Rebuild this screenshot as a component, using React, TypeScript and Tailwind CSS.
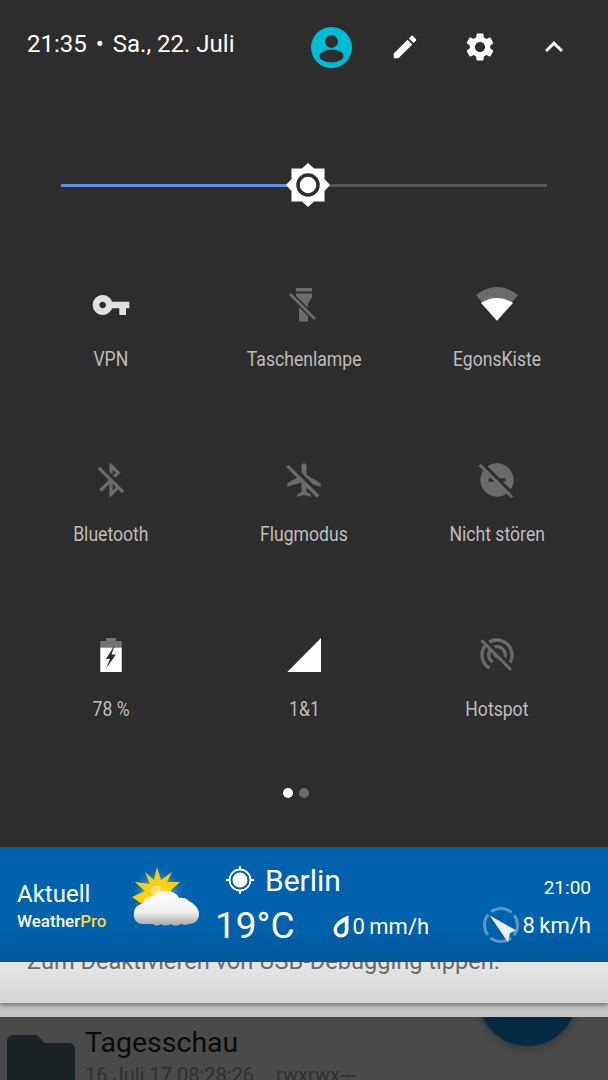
const OFF = "#6b6b6b";

const paths = {
  edit: "M3 17.25V21h3.75L17.81 9.94l-3.75-3.75L3 17.25zM20.71 7.04c.39-.39.39-1.02 0-1.41l-2.34-2.34c-.39-.39-1.02-.39-1.41 0l-1.83 1.83 3.75 3.75 1.83-1.83z",
  gear: "M19.14 12.94c.04-.3.06-.61.06-.94 0-.32-.02-.64-.07-.94l2.03-1.58c.18-.14.23-.41.12-.61l-1.92-3.32c-.12-.22-.37-.29-.59-.22l-2.39.96c-.5-.38-1.03-.7-1.62-.94l-.36-2.54c-.04-.24-.24-.41-.48-.41h-3.84c-.24 0-.43.17-.47.41l-.36 2.54c-.59.24-1.13.57-1.62.94l-2.39-.96c-.22-.08-.47 0-.59.22L2.74 8.87c-.12.21-.08.47.12.61l2.03 1.58c-.05.3-.09.63-.09.94s.02.64.07.94l-2.03 1.58c-.18.14-.23.41-.12.61l1.92 3.32c.12.22.37.29.59.22l2.39-.96c.5.38 1.03.7 1.62.94l.36 2.54c.05.24.24.41.48.41h3.84c.24 0 .44-.17.47-.41l.36-2.54c.59-.24 1.13-.56 1.62-.94l2.39.96c.22.08.47 0 .59-.22l1.92-3.32c.12-.22.07-.47-.12-.61l-2.01-1.58zM12 15.6c-1.98 0-3.6-1.62-3.6-3.6s1.62-3.6 3.6-3.6 3.6 1.62 3.6 3.6-1.62 3.6-3.6 3.6z",
  chevron: "M12 8l-6 6 1.41 1.41L12 10.83l4.59 4.58L18 14z",
  key: "M12.65 10C11.83 7.67 9.61 6 7 6c-3.31 0-6 2.69-6 6s2.69 6 6 6c2.61 0 4.83-1.67 5.65-4H17v4h4v-4h2v-4H12.65zM7 14c-1.1 0-2-.9-2-2s.9-2 2-2 2 .9 2 2-.9 2-2 2z",
  bluetooth: "M13 5.83l1.88 1.88-1.6 1.6 1.41 1.41 3.02-3.02L12 2h-1v5.03l2 2v-3.2zM5.41 4L4 5.41 10.59 12 5 17.59 6.41 19 11 14.41V22h1l4.29-4.29 2.3 2.29L20 18.59 5.41 4zM13 18.17v-3.76l1.88 1.88L13 18.17z",
  plane: "M10.5 7.67V3.5c0-.83.67-1.5 1.5-1.5s1.5.67 1.5 1.5V9l8.5 5v2l-4.49-1.32-7.01-7.01zm9.28 14.94l1.41-1.41-7.69-7.7-3.94-3.94-6.75-6.75-1.42 1.41 6.38 6.38L2 14v2l8.5-2.5V19L8 20.5V22l4-1 4 1v-1.5L13.5 19v-2.67l6.28 6.28z",
  dnd: "M17 11v2h-1.46l4.68 4.68C21.34 16.07 22 14.11 22 12c0-5.52-4.48-10-10-10-2.11 0-4.07.66-5.68 1.78L13.54 11H17zM2.27 2.27L1 3.54l2.78 2.78C2.66 7.93 2 9.89 2 12c0 5.52 4.48 10 10 10 2.11 0 4.07-.66 5.68-1.78L20.46 23l1.27-1.27L11 11 2.27 2.27zM7 13v-2h1.46l2 2H7z",
  hotspot: "M17.56 14.24c.28-.69.44-1.45.44-2.24 0-3.31-2.69-6-6-6-.79 0-1.55.16-2.24.44l1.62 1.62c.2-.03.41-.06.62-.06 2.21 0 4 1.79 4 4 0 .21-.02.42-.05.63l1.61 1.61zM12 4c4.42 0 8 3.58 8 8 0 1.35-.35 2.62-.95 3.74l1.47 1.47C21.46 15.69 22 13.91 22 12c0-5.52-4.48-10-10-10-1.91 0-3.69.55-5.21 1.47l1.46 1.46C9.37 4.34 10.65 4 12 4zM3.27 2.5L2 3.77l2.1 2.1C2.79 7.57 2 9.69 2 12c0 3.7 2.01 6.92 4.99 8.65l1-1.73C5.61 17.53 4 14.96 4 12c0-1.76.57-3.38 1.53-4.69l1.43 1.44C6.36 9.68 6 10.8 6 12c0 2.22 1.21 4.15 3 5.19l1-1.74c-1.19-.7-2-1.97-2-3.45 0-.65.17-1.25.44-1.79l1.58 1.58L10 12c0 1.1.9 2 2 2l.21-.02.01.01 7.51 7.51L21 20.23 4.27 3.5l-1-1z",
};

function Mat({ d, size = 40, color = "#fff" }: { d: string; size?: number; color?: string }) {
  return (
    <svg width={size} height={size} viewBox="0 0 24 24" fill={color}>
      <path d={d} />
    </svg>
  );
}

function Flashlight() {
  return (
    <svg width="40" height="40" viewBox="0 0 40 40">
      <rect x="12" y="3" width="16" height="3.5" fill={OFF} />
      <path d="M12 8.5h16v4l-4 6v18h-9v-18l-3-6z" fill={OFF} />
      <path d="M6 9 L31 34" stroke="#2d2d2d" strokeWidth="6" />
      <path d="M6 9 L31 34" stroke={OFF} strokeWidth="2.8" />
    </svg>
  );
}

function Wifi() {
  return (
    <svg width="44" height="40" viewBox="0 0 44 40">
      <path d="M1 10 Q22 -6 43 10 L22 35.7z" fill={OFF} />
      <path d="M6 18 Q22 8 38 18 L22 35.7z" fill="#fff" />
    </svg>
  );
}

function Battery() {
  return (
    <svg width="40" height="40" viewBox="0 0 40 40">
      <path d="M15 3h10v3h5.7v7H9.3V6H15z" fill="#757575" />
      <path d="M9.3 12.7h21.4V37H9.3z" fill="#fff" />
      <path d="M23 11 15 24h4l-4 9.500 10-14h-4.500l3-8.500z" fill="#2d2d2d" />
    </svg>
  );
}

function Signal() {
  return (
    <svg width="40" height="40" viewBox="0 0 40 40">
      <path d="M3.300 37 37 3v34z" fill="#fff" />
    </svg>
  );
}

const tiles = [
  { label: "VPN", icon: <Mat d={paths.key} color="#e0e0e0" /> },
  { label: "Taschenlampe", icon: <Flashlight /> },
  { label: "EgonsKiste", icon: <Wifi /> },
  { label: "Bluetooth", icon: <Mat d={paths.bluetooth} color={OFF} /> },
  { label: "Flugmodus", icon: <Mat d={paths.plane} color={OFF} /> },
  { label: "Nicht stören", icon: <Mat d={paths.dnd} color={OFF} /> },
  { label: "78 %", icon: <Battery /> },
  { label: "1&1", icon: <Signal /> },
  { label: "Hotspot", icon: <Mat d={paths.hotspot} color={OFF} /> },
];

function Avatar() {
  return (
    <svg width="41" height="41" viewBox="0 0 41 41">
      <circle cx="20.500" cy="20.500" r="20.500" fill="#00bcd4" />
      <circle cx="20.500" cy="14.500" r="6.500" fill="#2d2d2d" />
      <ellipse cx="20.500" cy="29" rx="12" ry="6.500" fill="#2d2d2d" />
    </svg>
  );
}

function Thumb() {
  return (
    <svg width="44" height="44" viewBox="0 0 44 44">
      <path d="M22 0l6 5.500h10.500V16L44 22l-5.500 6v10.500H28L22 44l-6-5.500H5.500V28L0 22l5.500-6V5.500H16z" fill="#fff" />
      <circle cx="22" cy="22" r="10" fill="#fff" stroke="#2d2d2d" strokeWidth="3.500" />
    </svg>
  );
}

function WeatherIcon() {
  return (
    <svg width="72" height="65" viewBox="0 0 72 65">
      <defs>
        <radialGradient id="glow">
          <stop offset="0.5" stopColor="#7fb0d8" stopOpacity="0.6" />
          <stop offset="1" stopColor="#0060ab" stopOpacity="0" />
        </radialGradient>
        <linearGradient id="cloud" x1="0" y1="0" x2="0" y2="1">
          <stop offset="0" stopColor="#ffffff" />
          <stop offset="0.6" stopColor="#f0f0f0" />
          <stop offset="1" stopColor="#a9a9a9" />
        </linearGradient>
      </defs>
      <circle cx="28" cy="30" r="28" fill="url(#glow)" />
      <path d="M2 33 15 27 5 18 20 20 15 8 24 16 27 3 31 16 42 8 37 18 50 18 41 26 40 40 12 40z" fill="#fbd010" />
      <circle cx="27" cy="27" r="6" fill="#fde36a" />
      <path
        d="M13 60c-8 0-10-7-9-12 1-6 5-8 9-8 1-5 5-8 11-8 2-4 6-5 12-5 7 0 11 3 13 7 3-1 8 0 10 3 4 2 10 7 10 13 0 6-4 10-10 10-2 1-6 1-8 0-3 2-8 2-10 0-3 2-8 2-10 0-3 2-6 2-8 0z"
        fill="url(#cloud)"
      />
    </svg>
  );
}

function Target() {
  return (
    <svg width="30" height="30" viewBox="0 0 30 30" fill="#fff">
      <circle cx="15" cy="15" r="7.500" />
      <circle cx="15" cy="15" r="10.500" fill="none" stroke="#fff" strokeWidth="1.800" />
      <path d="M15 1v4M15 25v4M1 15h4M25 15h4" stroke="#fff" strokeWidth="1.800" />
    </svg>
  );
}

function Drop() {
  return (
    <svg width="16" height="23" viewBox="0 0 16 23">
      <path
        fillRule="evenodd"
        d="M15.500.5V15a7.500 7.500 0 0 1-15 0C.5 8 9 3 15.500.5zM11.800 7C7.500 9 4 11.500 4 15a3.900 3.900 0 0 0 7.800 0z"
        fill="#fff"
      />
    </svg>
  );
}

function Compass() {
  return (
    <svg width="38" height="38" viewBox="0 0 38 38">
      <circle cx="19" cy="19" r="16.500" fill="none" stroke="#5d97c9" strokeWidth="3" strokeDasharray="22 3.900" strokeDashoffset="11" />
      <path d="M7.700 9.500 34.300 24.500 28 27 26 36.200z" fill="#e9eef2" />
    </svg>
  );
}

export default function App() {
  return (
    <div className="w-[608px] h-[1080px] overflow-hidden bg-[#4a4a4a] [font-family:Roboto,sans-serif]">
      <div className="h-[847px] bg-[#2d2d2d]">
        {/* header */}
        <div className="h-[94px] flex items-center pl-[27px] pr-[17px]">
          <div className="text-[24px] text-white -mt-[6px] flex items-center whitespace-pre">
            <span>21:35</span>
            <span className="w-[26px] text-center">•</span>
            <span>Sa., 22. Juli</span>
          </div>
          <div className="ml-auto flex items-center">
            <div className="w-[74px] flex justify-center"><Avatar /></div>
            <div className="w-[74px] flex justify-center"><Mat d={paths.edit} size={30} /></div>
            <div className="w-[75px] flex justify-center"><Mat d={paths.gear} size={34} /></div>
            <div className="w-[74px] flex justify-center"><Mat d={paths.chevron} size={36} /></div>
          </div>
        </div>

        {/* brightness */}
        <div className="relative h-[44px] mt-[69px] mx-[61px] flex items-center">
          <div className="h-[3px] w-[230px] bg-[#5b8fe8]" />
          <div className="h-[3px] flex-1 bg-[#555555]" />
          <div className="absolute left-[225px] top-0"><Thumb /></div>
        </div>

        {/* tiles */}
        <div className="mt-[78px] px-[14px] grid grid-cols-3 gap-y-[89px]">
          {tiles.map((t) => (
            <div key={t.label} className="flex flex-col items-center">
              <div className="h-[40px] flex items-center justify-center">{t.icon}</div>
              <div className="mt-[22px] h-[24px] leading-[24px] text-[20px] text-[#bdbdbd] whitespace-nowrap scale-x-[0.88]">{t.label}</div>
            </div>
          ))}
        </div>

        <div className="mt-[67px] pr-[16px] flex justify-center gap-[6px]">
          <div className="w-[10px] h-[10px] rounded-full bg-white" />
          <div className="w-[10px] h-[10px] rounded-full bg-[#6b6b6b]" />
        </div>
      </div>

      {/* weather widget */}
      <div className="relative z-10 h-[115px] bg-gradient-to-b from-[#0061ac] from-70% to-[#00589d] flex pl-[17px] pr-[17px] text-white">
        <div className="w-[113px] pt-[31px]">
          <div className="text-[24px] leading-[32px]">Aktuell</div>
          <div className="text-[17px] leading-[22px] font-medium">
            Weather<span className="text-[#fdd835]">Pro</span>
          </div>
        </div>
        <div className="pt-[17px] w-[85px]"><WeatherIcon /></div>
        <div className="pt-[15px]">
          <div className="flex items-center pl-[10px] h-[36px]">
            <Target />
            <span className="text-[30px] ml-[10px]">Berlin</span>
          </div>
          <div className="flex items-center h-[46px] mt-[5px]">
            <span className="text-[37px]">19°C</span>
            <div className="ml-[38px] flex items-center">
              <Drop />
              <span className="text-[22px] ml-[4px] [word-spacing:-1px]">0 mm/h</span>
            </div>
          </div>
        </div>
        <div className="ml-auto flex flex-col items-end pt-[29px]">
          <div className="text-[19px] leading-[24px]">21:00</div>
          <div className="flex items-center mt-[6px] h-[38px]">
            <Compass />
            <span className="text-[22px] ml-[3px] [word-spacing:-1px]">8 km/h</span>
          </div>
        </div>
      </div>

      {/* notification behind */}
      <div className="h-[41px] overflow-hidden bg-gradient-to-b from-[#e6e6e6] to-[#d4d4d4] pl-[27px] shadow-[0_3px_4px_rgba(0,0,0,0.35)] relative">
        <div className="-mt-[16px] text-[23.600px] leading-[30px] text-[#6a6a6a] whitespace-nowrap">Zum Deaktivieren von USB-Debugging tippen.</div>
      </div>
      <div className="h-[14px] bg-[#c6c6c6]" />

      {/* file list */}
      <div className="relative h-[63px] overflow-hidden flex bg-[#4a4a4a]">
        <div className="absolute left-[478px] -top-[70px] w-[99px] h-[99px] rounded-full bg-[#032c44] shadow-[0_4px_8px_rgba(0,0,0,0.25)]" />
        <div className="pl-[7px] pt-[18px] w-[85px]">
          <svg width="68" height="60" viewBox="0 0 68 60">
            <path d="M6 0h24l8 8h24a6 6 0 0 1 6 6v46H0V6a6 6 0 0 1 6-6z" fill="#1b2226" />
          </svg>
        </div>
        <div>
          <div className="text-[28.500px] leading-[36px] mt-[8px] text-[#0b0b0b]">Tagesschau</div>
          <div className="text-[20px] leading-[28px] text-[#2f2f2f] whitespace-pre flex">
            <span>16.Juli 17 08:28:26</span>
            <span className="ml-[22px]">rwxrwx---</span>
          </div>
        </div>
      </div>
    </div>
  );
}
